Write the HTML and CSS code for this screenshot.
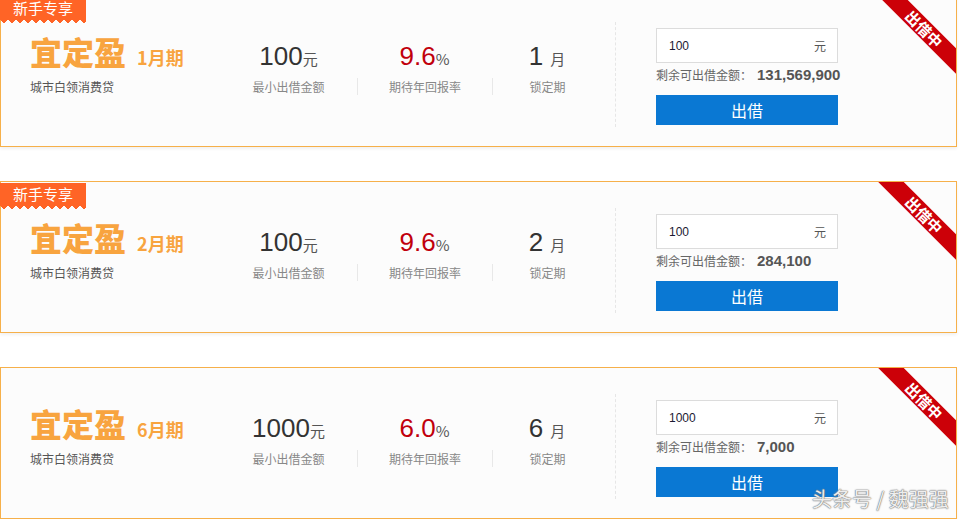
FILE: index.html
```html
<!DOCTYPE html>
<html lang="zh-CN">
<head>
  <meta charset="UTF-8" />
  <meta name="viewport" content="width=device-width, initial-scale=1.0" />
  <title>宜定盈</title>
  <link rel="stylesheet" href="styles.css">
</head>
<body>
<div class="list">

  <div class="card">
    <div class="badge">新手专享</div>
    <div class="ribbon-wrap"><div class="ribbon">出借中</div></div>
    <div class="title-col">
      <h2 class="title">宜定盈<span class="term">1月期</span></h2>
      <p class="sub">城市白领消费贷</p>
    </div>
    <div class="stat stat-1">
      <div class="num">100<span class="unit">元</span></div>
      <div class="label">最小出借金额</div>
    </div>
    <div class="stat stat-2">
      <div class="num rate">9.6<span class="unit">%</span></div>
      <div class="label">期待年回报率</div>
    </div>
    <div class="stat stat-3">
      <div class="num">1 <span class="unit">月</span></div>
      <div class="label">锁定期</div>
    </div>
    <div class="invest">
      <div class="amount-box"><span>100</span><span class="yuan">元</span></div>
      <div class="remain">剩余可出借金额：<strong>131,569,900</strong></div>
      <button class="btn">出借</button>
    </div>
  </div>

  <div class="card">
    <div class="badge">新手专享</div>
    <div class="ribbon-wrap"><div class="ribbon">出借中</div></div>
    <div class="title-col">
      <h2 class="title">宜定盈<span class="term">2月期</span></h2>
      <p class="sub">城市白领消费贷</p>
    </div>
    <div class="stat stat-1">
      <div class="num">100<span class="unit">元</span></div>
      <div class="label">最小出借金额</div>
    </div>
    <div class="stat stat-2">
      <div class="num rate">9.6<span class="unit">%</span></div>
      <div class="label">期待年回报率</div>
    </div>
    <div class="stat stat-3">
      <div class="num">2 <span class="unit">月</span></div>
      <div class="label">锁定期</div>
    </div>
    <div class="invest">
      <div class="amount-box"><span>100</span><span class="yuan">元</span></div>
      <div class="remain">剩余可出借金额：<strong>284,100</strong></div>
      <button class="btn">出借</button>
    </div>
  </div>

  <div class="card">
    <div class="ribbon-wrap"><div class="ribbon">出借中</div></div>
    <div class="title-col">
      <h2 class="title">宜定盈<span class="term">6月期</span></h2>
      <p class="sub">城市白领消费贷</p>
    </div>
    <div class="stat stat-1">
      <div class="num">1000<span class="unit">元</span></div>
      <div class="label">最小出借金额</div>
    </div>
    <div class="stat stat-2">
      <div class="num rate">6.0<span class="unit">%</span></div>
      <div class="label">期待年回报率</div>
    </div>
    <div class="stat stat-3">
      <div class="num">6 <span class="unit">月</span></div>
      <div class="label">锁定期</div>
    </div>
    <div class="invest">
      <div class="amount-box"><span>1000</span><span class="yuan">元</span></div>
      <div class="remain">剩余可出借金额：<strong>7,000</strong></div>
      <button class="btn">出借</button>
    </div>
  </div>

</div>

<div class="watermark">头条号 / 魏强强</div>
</body>
</html>
```

FILE: styles.css
```css
body {
  margin: 0;
  padding: 0;
  background: #fff;
  font-family: "Liberation Sans", "Noto Sans CJK SC", sans-serif;
  color: #333;
  overflow: hidden;
}
.list {
  margin-top: -5px;
}
.card {
  position: relative;
  display: flex;
  align-items: flex-start;
  width: 926px;
  height: 150px;
  padding-left: 29px;
  margin-bottom: 34px;
  background: #fcfcfc;
  border: 1px solid #f6b04a;
  box-shadow: 0 2px 3px rgba(0,0,0,0.06);
}

/* 新手专享 tag */
.badge {
  position: absolute;
  top: 1px;
  left: -1px;
  width: 86px;
  height: 22px;
  line-height: 22px;
  text-align: center;
  font-size: 15px;
  color: #fff;
  background: #ff6426;
  font-family: "Noto Sans CJK SC", sans-serif;
}
.badge::after {
  content: "";
  position: absolute;
  left: 0;
  right: 0;
  top: 22px;
  height: 4px;
  background: conic-gradient(from -45deg at 50% 100%, #ff6426 90deg, transparent 0);
  background-size: 8px 4px;
}

/* 出借中 corner */
.ribbon-wrap {
  position: absolute;
  top: 0;
  right: 0;
  width: 80px;
  height: 80px;
  overflow: hidden;
}
.ribbon {
  position: absolute;
  left: -12px;
  top: 24px;
  width: 120px;
  height: 18px;
  line-height: 18px;
  text-align: center;
  background: #cc0008;
  color: #fff;
  font-size: 15px;
  font-weight: bold;
  font-family: "Noto Sans CJK SC", sans-serif;
  transform: rotate(45deg);
}

.title-col {
  width: 190px;
  padding-top: 37px;
}
.title {
  margin: 0;
  font-family: "Noto Sans CJK SC", sans-serif;
  font-size: 32px;
  line-height: 36px;
  font-weight: 900;
  color: #f8a43f;
  white-space: nowrap;
}
.term {
  margin-left: 11px;
  font-size: 18px;
  font-weight: bold;
}
.sub {
  margin: 4px 0 0;
  font-size: 12px;
  line-height: 16px;
  color: #555;
  font-family: "Noto Sans CJK SC", sans-serif;
}

.stat {
  padding-top: 45px;
  text-align: center;
}
.stat-1 { width: 137px; }
.stat-2 { width: 135px; }
.stat-3 { width: 110px; }
.num {
  height: 30px;
  font-size: 26px;
  line-height: 30px;
  color: #333;
}
.num.rate {
  color: #c1000c;
}
.unit {
  font-size: 15px;
  line-height: 1;
  color: #555;
  font-family: "Noto Sans CJK SC", sans-serif;
}
.label {
  margin-top: 7px;
  height: 17px;
  line-height: 17px;
  font-size: 12px;
  color: #888;
  font-family: "Noto Sans CJK SC", sans-serif;
}
.stat + .stat .label {
  border-left: 1px solid #e8e8e8;
}

.invest {
  margin: 26px 0 0 13px;
  height: 105px;
  padding: 6px 0 0 40px;
  border-left: 1px dashed #e6e6e6;
  box-sizing: border-box;
}
.amount-box {
  display: flex;
  justify-content: space-between;
  align-items: center;
  width: 182px;
  height: 35px;
  padding: 0 11px 0 12px;
  box-sizing: border-box;
  background: #fff;
  border: 1px solid #dcdcdc;
  font-size: 12px;
  color: #1c1a33;
}
.yuan {
  color: #555;
  font-family: "Noto Sans CJK SC", sans-serif;
}
.remain {
  margin-top: 2px;
  height: 20px;
  line-height: 20px;
  font-size: 12px;
  color: #666;
  white-space: nowrap;
  font-family: "Noto Sans CJK SC", sans-serif;
}
.remain strong {
  margin-left: 5px;
  font-family: "Liberation Sans", sans-serif;
  font-size: 15px;
  color: #555;
}
.btn {
  display: block;
  width: 182px;
  height: 30px;
  margin-top: 10px;
  padding: 0;
  border: none;
  background: #0a78d3;
  color: #fff;
  font-size: 16px;
  font-family: "Noto Sans CJK SC", sans-serif;
  cursor: pointer;
}

.watermark {
  position: absolute;
  left: 812px;
  top: 484px;
  font-size: 20px;
  color: rgba(255,255,255,0.9);
  text-shadow: 0 0 1px #777, 0 0 1px #777, 0 0 2px #999;
  font-family: "Noto Sans CJK SC", sans-serif;
  white-space: nowrap;
}
```
